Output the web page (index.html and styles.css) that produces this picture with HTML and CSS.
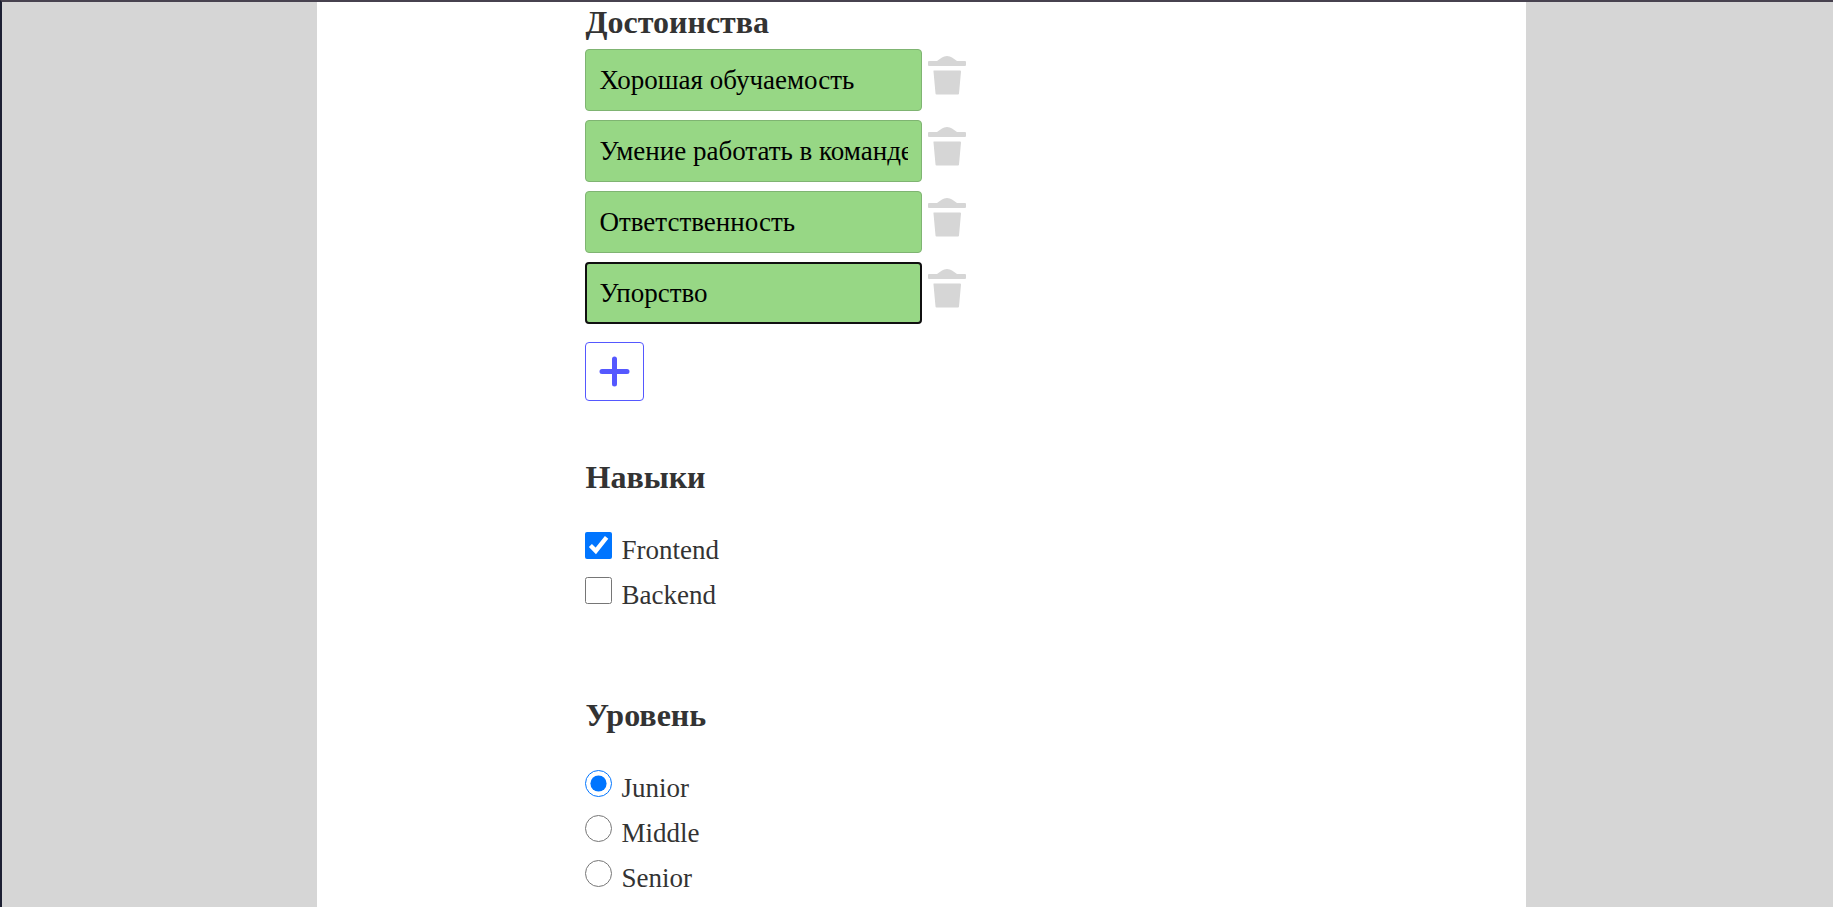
FILE: index.html
```html
<!DOCTYPE html>
<html lang="ru">
<head>
<meta charset="utf-8">
<title>Резюме</title>
<link rel="stylesheet" href="styles.css">
</head>
<body>
<svg class="sprite" aria-hidden="true">
  <symbol id="trash" viewBox="0 0 38 39">
    <path d="M1 5h8l5-3.500q2-1.500 5-1.500t5 1.500l5 3.500h8q1 0 1 1v3q0 1-1 1H1q-1 0-1-1V6q0-1 1-1z"/>
    <path d="M6 14.500h26q1 0 1 1l-2 22q0 1-1 1H8.500q-1 0-1-1l-2-22q-.5-1 .5-1z"/>
  </symbol>
</svg>
<main class="page">
  <form class="form">
    <section class="section section-strengths">
      <h2 class="title">Достоинства</h2>
      <ul class="strengths">
        <li class="strength"><input class="field" type="text" value="Хорошая обучаемость" aria-label="Достоинство 1"><button class="remove" type="button" aria-label="Удалить"><svg class="trash"><use href="#trash"/></svg></button></li>
        <li class="strength"><input class="field" type="text" value="Умение работать в команде" aria-label="Достоинство 2"><button class="remove" type="button" aria-label="Удалить"><svg class="trash"><use href="#trash"/></svg></button></li>
        <li class="strength"><input class="field" type="text" value="Ответственность" aria-label="Достоинство 3"><button class="remove" type="button" aria-label="Удалить"><svg class="trash"><use href="#trash"/></svg></button></li>
        <li class="strength"><input class="field field-active" type="text" value="Упорство" aria-label="Достоинство 4"><button class="remove" type="button" aria-label="Удалить"><svg class="trash"><use href="#trash"/></svg></button></li>
      </ul>
      <button class="add" type="button" aria-label="Добавить"><svg class="plus" viewBox="0 0 31 31"><path d="M15.500 3v25M3 15.500h25"/></svg></button>
    </section>
    <section class="section section-skills">
      <h2 class="title">Навыки</h2>
      <div class="options">
        <label class="option"><input class="check" type="checkbox" checked><span class="option-text">Frontend</span></label>
        <label class="option"><input class="check" type="checkbox"><span class="option-text">Backend</span></label>
      </div>
    </section>
    <section class="section section-level">
      <h2 class="title">Уровень</h2>
      <div class="options">
        <label class="option"><input class="check" type="radio" name="level" checked><span class="option-text">Junior</span></label>
        <label class="option"><input class="check" type="radio" name="level"><span class="option-text">Middle</span></label>
        <label class="option"><input class="check" type="radio" name="level"><span class="option-text">Senior</span></label>
      </div>
    </section>
  </form>
</main>
</body>
</html>
```

FILE: styles.css
```css
* {
  box-sizing: border-box;
}

body {
  margin: 0;
  min-height: 100vh;
  display: flex;
  justify-content: center;
  padding-left: 8px;
  border-top: 2px solid #47424f;
  border-left: 2px solid #1d2033;
  background: #d6d6d6;
  color: #333;
  font-family: "Liberation Serif", "Times New Roman", serif;
  font-size: 27px;
}

.sprite {
  position: absolute;
  width: 0;
  height: 0;
}

.page {
  width: 66.3%;
  background: #fff;
}

.form {
  width: 55.6%;
  margin: 0 auto;
}

.title {
  margin: 0;
  font-size: 32px;
  line-height: 36px;
}

.section-strengths {
  padding-top: 2px;
}

.section-skills {
  padding-top: 58px;
}

.section-level {
  padding-top: 86px;
}

.strengths {
  display: flex;
  flex-direction: column;
  gap: 9px;
  margin: 9px 0 18px;
  padding: 0;
  list-style: none;
}

.strength {
  display: flex;
  align-items: flex-start;
  gap: 6px;
}

.field {
  width: 337px;
  height: 62px;
  padding: 0 13px;
  border: 1px solid #7fb472;
  border-radius: 4px;
  background: #97d785;
  color: #000;
  font: inherit;
}

.field-active {
  padding: 0 12px;
  border: 2px solid #101010;
}

.remove {
  padding: 7px 0 0;
  border: 0;
  background: none;
  color: #d6d6d6;
}

.trash {
  display: block;
  width: 38px;
  height: 39px;
  fill: currentColor;
}

.add {
  display: flex;
  align-items: center;
  justify-content: center;
  width: 59px;
  height: 59px;
  padding: 0;
  border: 1px solid #5558ff;
  border-radius: 4px;
  background: #fff;
}

.plus {
  width: 31px;
  height: 31px;
  fill: none;
  stroke: #5558ff;
  stroke-width: 5;
  stroke-linecap: round;
}

.options {
  display: flex;
  flex-direction: column;
  align-items: flex-start;
  gap: 11px;
  margin-top: 37px;
}

.option {
  display: flex;
  align-items: baseline;
  gap: 9px;
  line-height: 31px;
}

.check {
  width: 27px;
  height: 27px;
  margin: 0;
}
```
